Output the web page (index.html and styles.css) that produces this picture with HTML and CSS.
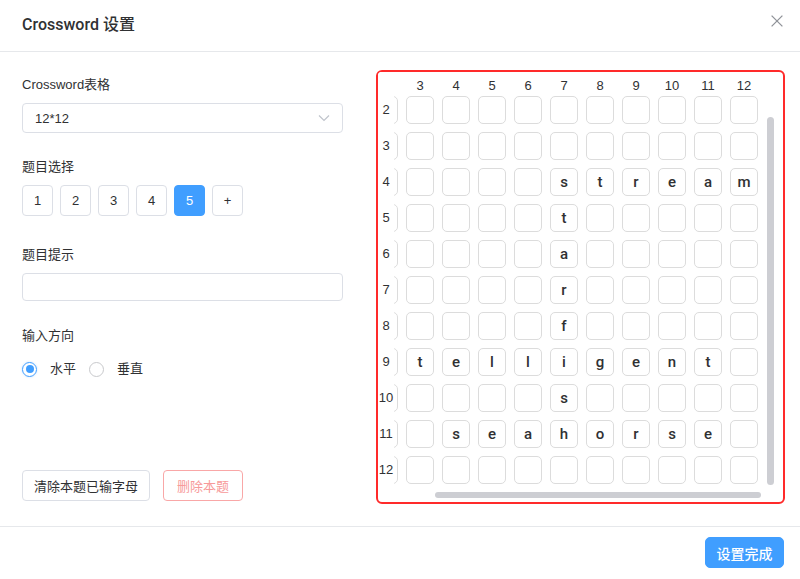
FILE: index.html
```html
<!DOCTYPE html>
<html lang="zh-CN">
  <head>
    <meta charset="UTF-8" />
    <meta name="viewport" content="width=device-width, initial-scale=1.0" />
    <title>Crossword 设置</title>
    <link rel="stylesheet" href="styles.css">
  </head>
  <body>
    <div class="dialog">
      <header class="dialog-header">
        <h2 class="dialog-title">Crossword 设置</h2>
        <button class="close-button" aria-label="关闭">
          <svg width="12" height="12" viewBox="0 0 12 12">
            <path d="M0.6 0.6 L11.4 11.4 M11.4 0.6 L0.6 11.4" stroke="#909399" stroke-width="1.3" fill="none" />
          </svg>
        </button>
      </header>

      <main class="dialog-body">
        <section class="settings">
          <div class="form-item select-item">
            <label class="field-label">Crossword表格</label>
            <div class="select">
              <span>12*12</span>
              <svg width="12" height="8" viewBox="0 0 12 8">
                <path d="M1 1.5 L6 6.5 L11 1.5" stroke="#c0c4cc" stroke-width="1.2" fill="none" />
              </svg>
            </div>
          </div>

          <div class="form-item choices-item">
            <label class="field-label">题目选择</label>
            <div class="question-list">
              <button class="button question-button">1</button>
              <button class="button question-button">2</button>
              <button class="button question-button">3</button>
              <button class="button question-button">4</button>
              <button class="button question-button active-question">5</button>
              <button class="button question-button">+</button>
            </div>
          </div>

          <div class="form-item hint-item">
            <label class="field-label">题目提示</label>
            <input type="text" class="text-input" />
          </div>

          <div class="form-item">
            <label class="field-label">输入方向</label>
            <div class="radio-group">
              <label class="radio radio-checked"><span class="radio-dot"></span>水平</label>
              <label class="radio"><span class="radio-dot"></span>垂直</label>
            </div>
          </div>

          <div class="settings-actions">
            <button class="button action-button">清除本题已输字母</button>
            <button class="button action-button danger-button">删除本题</button>
          </div>
        </section>

        <section class="board-box">
          <div class="board-scroll">
            <div class="board"></div>
          </div>
          <div class="scroll-thumb scroll-thumb-y"></div>
          <div class="scroll-thumb scroll-thumb-x"></div>
        </section>
      </main>

      <footer class="dialog-footer">
        <button class="button primary-button">设置完成</button>
      </footer>
    </div>

    <script>
const size = 12
const words = [
  { row: 4, col: 7, dir: 'across', word: 'stream' },
  { row: 4, col: 7, dir: 'down', word: 'starfish' },
  { row: 9, col: 1, dir: 'across', word: 'intelligent' },
  { row: 11, col: 4, dir: 'across', word: 'seahorse' },
]

const grid = Array.from({ length: size }, () => Array(size).fill(''))

words.forEach(({ row, col, dir, word }) => {
  word.split('').forEach((ch, i) => {
    const r = dir === 'down' ? row + i : row
    const c = dir === 'across' ? col + i : col
    grid[r - 1][c - 1] = ch
  })
})

const board = document.querySelector('.board')
const boardScroll = document.querySelector('.board-scroll')

let html = '<div class="board-row board-head"><span class="board-corner"></span>'
for (let c = 1; c <= size; c++) {
  html += `<span class="col-no">${c}</span>`
}
html += '</div>'

grid.forEach((cells, r) => {
  html += `<div class="board-row"><span class="row-no">${r + 1}</span>`
  cells.forEach((ch) => {
    html += `<div class="cell">${ch}</div>`
  })
  html += '</div>'
})

board.innerHTML = html

boardScroll.scrollLeft = 64
boardScroll.scrollTop = 40
    </script>
  </body>
</html>
```

FILE: styles.css
```css
* {
  box-sizing: border-box;
}

body {
  margin: 0;
  font-family: 'Liberation Sans', 'Noto Sans CJK SC', sans-serif;
  font-size: 13px;
  color: #303133;
  background: #fff;
}

.dialog {
  display: flex;
  flex-direction: column;
  height: 100vh;
}

.dialog-header {
  flex-shrink: 0;
  display: flex;
  justify-content: space-between;
  align-items: flex-start;
  height: 52px;
  padding: 15px 17px 0 22px;
  border-bottom: 1px solid #e6e8eb;
}

.dialog-title {
  margin: 0;
  font-family: 'Roboto', 'Noto Sans CJK SC', sans-serif;
  font-size: 16px;
  font-weight: 500;
  line-height: 20px;
  color: #303133;
}

.close-button {
  border: none;
  background: none;
  padding: 0;
  margin-top: 0;
  width: 12px;
  height: 12px;
  cursor: pointer;
}

.close-button svg {
  display: block;
}

.dialog-body {
  flex: 1;
  min-height: 0;
  display: flex;
  gap: 33px;
  padding: 18px 15px 22px 22px;
}

.settings {
  flex: 0 0 321px;
  display: flex;
  flex-direction: column;
  padding: 6px 0 3px;
}

.form-item {
  margin-bottom: 26px;
}

.select-item {
  margin-bottom: 25px;
}

.choices-item {
  margin-bottom: 30px;
}

.field-label {
  display: block;
  line-height: 18px;
  margin-bottom: 9px;
  color: #303133;
}

.select {
  display: flex;
  justify-content: space-between;
  align-items: center;
  height: 30px;
  padding: 0 12px;
  border: 1px solid #dcdfe6;
  border-radius: 4px;
  color: #303133;
}

.question-list {
  display: flex;
  gap: 7px;
}

.button {
  border: 1px solid #dcdfe6;
  border-radius: 4px;
  background: #fff;
  color: #303133;
  font-family: inherit;
  font-size: 13px;
  cursor: pointer;
}

.question-button {
  width: 31px;
  height: 31px;
  padding: 0;
}

.active-question {
  background: #409eff;
  border-color: #409eff;
  color: #fff;
}

.text-input {
  display: block;
  width: 100%;
  height: 28px;
  margin-top: 2px;
  border: 1px solid #dcdfe6;
  border-radius: 4px;
  padding: 0 12px;
  font-family: inherit;
  font-size: 13px;
}

.radio-group {
  display: flex;
  align-items: center;
  padding-top: 7px;
}

.radio {
  display: flex;
  align-items: center;
  gap: 13px;
  margin-right: 13px;
  line-height: 16px;
  color: #303133;
}

.radio-dot {
  position: relative;
  width: 15px;
  height: 15px;
  border: 1px solid #c8c9cc;
  border-radius: 50%;
}

.radio-checked .radio-dot {
  border-color: #409eff;
  box-shadow: 0 0 2px rgba(64, 158, 255, 0.35);
}

.radio-checked .radio-dot::after {
  content: '';
  position: absolute;
  top: 2.5px;
  left: 2.5px;
  width: 8px;
  height: 8px;
  border-radius: 50%;
  background: #409eff;
}

.settings-actions {
  margin-top: auto;
  display: flex;
  gap: 13px;
}

.action-button {
  height: 31px;
  padding: 0 11px;
}

.danger-button {
  padding: 0 13px;
  border-color: #f9a7a7;
  color: #f79a9a;
}

.board-box {
  position: relative;
  flex: 0 0 409px;
  min-width: 0;
  min-height: 0;
  display: flex;
  flex-direction: column;
  border: 2px solid #ff2a2a;
  border-radius: 6px;
  padding: 0 9px 3px 0;
  overflow: hidden;
}

.board-scroll {
  flex: 1;
  min-height: 0;
  overflow: auto;
  scrollbar-width: none;
}

.board-scroll::-webkit-scrollbar {
  display: none;
}

.scroll-thumb {
  position: absolute;
  background: #cdced3;
  border-radius: 4px;
}

.scroll-thumb-y {
  top: 45px;
  bottom: 17px;
  right: 9px;
  width: 7px;
}

.scroll-thumb-x {
  left: 57px;
  right: 22px;
  bottom: 4px;
  height: 6px;
}

.board {
  width: max-content;
  padding: 0 16px 24px 0;
}

.board-row {
  display: flex;
}

.board-head {
  position: sticky;
  top: 0;
  z-index: 2;
  height: 24px;
  padding-top: 4px;
  background: #fff;
}

.board-corner {
  position: sticky;
  left: 0;
  width: 16px;
  background: #fff;
}

.col-no {
  width: 36px;
  line-height: 20px;
  text-align: center;
}

.row-no {
  position: sticky;
  left: 0;
  z-index: 1;
  width: 16px;
  height: 36px;
  line-height: 36px;
  text-align: center;
  background: #fff;
}

.cell {
  display: flex;
  justify-content: center;
  align-items: center;
  width: 28px;
  height: 28px;
  margin: 4px;
  border: 1px solid #dcdcdc;
  border-radius: 5px;
  font-family: 'Roboto', sans-serif;
  font-size: 15px;
  font-weight: 500;
  color: #303133;
}

.dialog-footer {
  flex-shrink: 0;
  display: flex;
  justify-content: flex-end;
  height: 53px;
  padding: 10px 16px 0;
  border-top: 1px solid #e6e8eb;
}

.primary-button {
  height: 31px;
  width: 79px;
  padding: 0;
  border-color: #409eff;
  background: #409eff;
  color: #fff;
  font-size: 14px;
  font-weight: 500;
  border-radius: 5px;
}
```
